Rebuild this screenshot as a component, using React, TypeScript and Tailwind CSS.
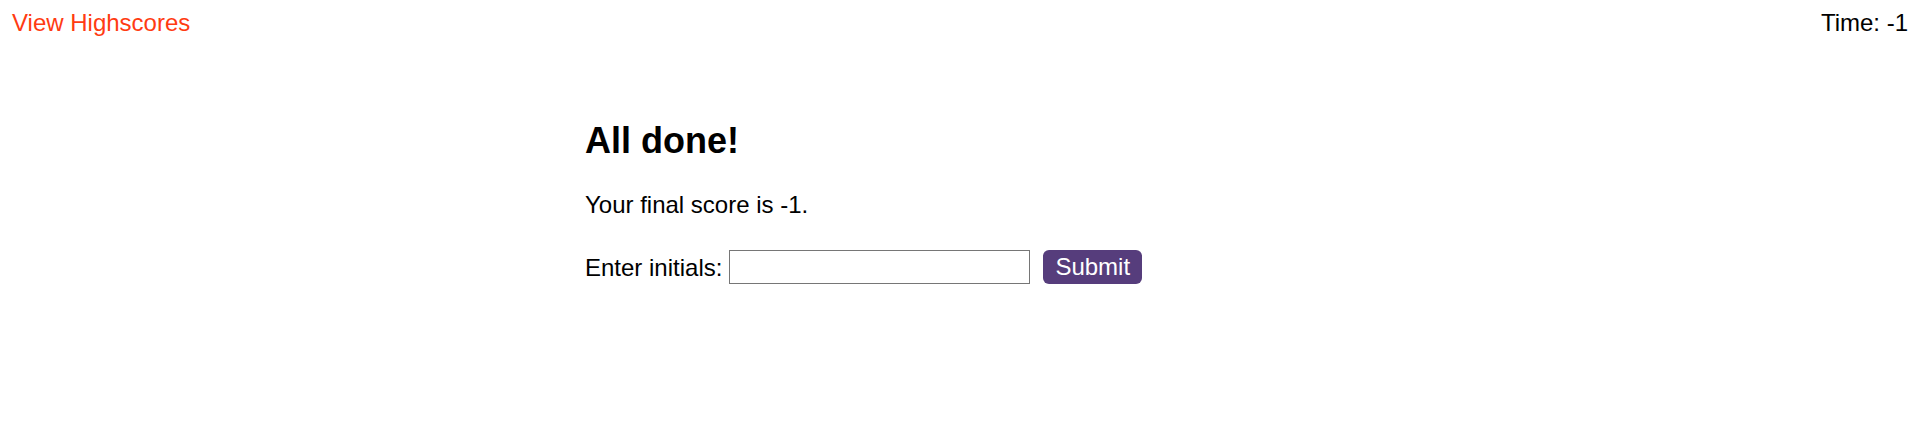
import { useState } from 'react';

export default function App() {
  const [initials, setInitials] = useState('');
  const time = -1;
  const score = -1;

  return (
    <div className="min-h-[444px] bg-white font-['Liberation_Sans',Arial,sans-serif] text-[24px] text-black">
      {/* top bar */}
      <header className="flex items-start justify-between px-3 pt-[9px] leading-[27px]">
        <a href="#" className="text-[#ff3b12]">
          View Highscores
        </a>
        <div>Time: {time}</div>
      </header>

      {/* end screen */}
      <main className="mx-auto mt-[84px] w-[750px]">
        <h2 className="text-[36px] font-bold leading-[41px]">All done!</h2>
        <p className="mt-[30px] leading-[27px]">Your final score is {score}.</p>
        <form
          className="mt-[32px] flex items-center leading-[27px]"
          onSubmit={(e) => e.preventDefault()}
        >
          <label htmlFor="initials">Enter initials:</label>
          <input
            id="initials"
            value={initials}
            onChange={(e) => setInitials(e.target.value)}
            className="ml-[7px] h-[34px] w-[301px] border border-[#767676] bg-white px-1 text-[20px] outline-none"
          />
          <button
            type="submit"
            className="ml-[13px] h-[34px] rounded-[6px] bg-[#563d7c] px-3 leading-none text-white"
          >
            Submit
          </button>
        </form>
      </main>
    </div>
  );
}
